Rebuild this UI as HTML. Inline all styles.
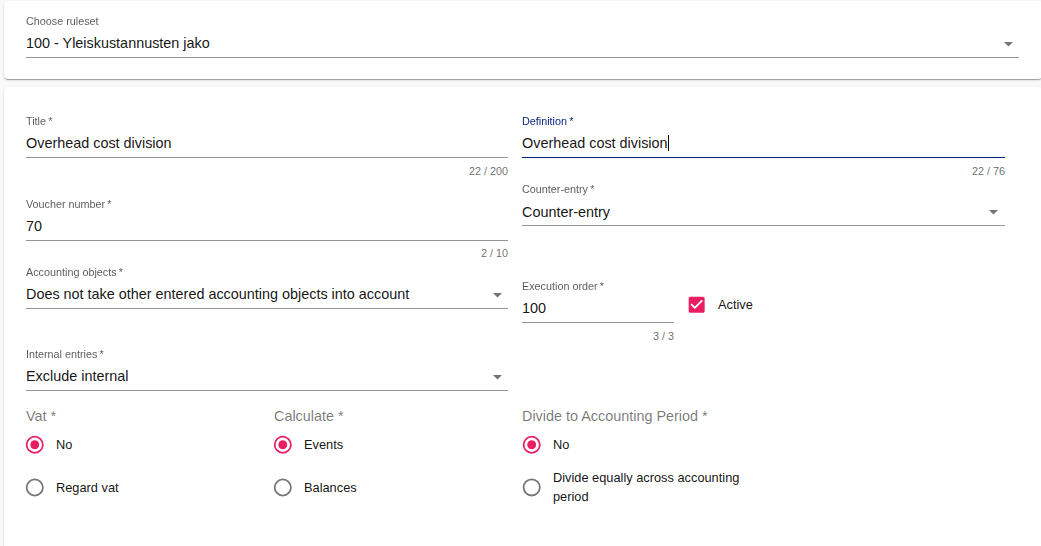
<!DOCTYPE html>
<html><head><meta charset="utf-8">
<style>
html,body{margin:0;padding:0;}
body{width:1041px;height:546px;overflow:hidden;background:#fafafa;position:relative;font-family:"Liberation Sans",sans-serif;}
.card{position:absolute;background:#fff;border-radius:4px;box-shadow:0 2px 1px -1px rgba(0,0,0,0.2),0 1px 1px 0 rgba(0,0,0,0.14),0 1px 3px 0 rgba(0,0,0,0.12);}
.t{position:absolute;white-space:nowrap;line-height:16px;}
.lab{font-size:14.4px;color:rgba(0,0,0,0.66);letter-spacing:0px;line-height:16px;transform:scale(0.75) translateZ(0);transform-origin:0 0;}
.val{font-size:14.4px;color:rgba(0,0,0,0.93);}
.help{font-size:10.8px;color:rgba(0,0,0,0.6);text-align:right;line-height:12px;}
.ul{position:absolute;height:1px;background:rgba(0,0,0,0.42);}
.arr{position:absolute;width:0;height:0;border-left:5px solid transparent;border-right:5px solid transparent;border-top:5px solid rgba(0,0,0,0.54);}
.leg{font-size:14.4px;color:rgba(0,0,0,0.54);}
.radio{position:absolute;width:24px;height:24px;}
.rl{font-size:12.8px;color:rgba(0,0,0,0.93);}
</style></head><body>
<div class="card" style="left:4px;top:1px;width:1038px;height:78px;"></div>
<div class="card" style="left:4px;top:87px;width:1038px;height:470px;"></div>

<!-- top select -->
<div class="t lab" style="left:26px;top:15px;">Choose ruleset</div>
<div class="t val" style="left:26px;top:35px;">100 - Yleiskustannusten jako</div>
<div class="ul" style="left:26px;top:57px;width:993px;"></div>
<svg style="position:absolute;left:1004.1px;top:41.8px;overflow:visible" width="9" height="4.5" viewBox="0 0 9 4.5"><polygon points="0,0 9,0 4.5,4.5" fill="rgba(0,0,0,0.54)"/></svg>

<!-- Title -->
<div class="t lab" style="left:26px;top:115px;">Title&thinsp;*</div>
<div class="t val" style="left:26px;top:135px;">Overhead cost division</div>
<div class="ul" style="left:26px;top:157px;width:482px;"></div>
<div class="t help" style="left:408px;width:100px;top:165px;">22 / 200</div>

<!-- Definition -->
<div class="t lab" style="left:522px;top:115px;color:#081f80;">Definition&thinsp;*</div>
<div class="t val" style="left:522px;top:135px;">Overhead cost division<span style="display:inline-block;width:1px;height:16px;background:#000;vertical-align:-3px;"></span></div>
<div class="ul" style="left:522px;top:157px;width:483px;height:1px;background:#00207f;"></div>
<div class="t help" style="left:905px;width:100px;top:165px;">22 / 76</div>

<!-- Voucher -->
<div class="t lab" style="left:26px;top:198px;">Voucher number&thinsp;*</div>
<div class="t val" style="left:26px;top:218px;">70</div>
<div class="ul" style="left:26px;top:240px;width:482px;"></div>
<div class="t help" style="left:408px;width:100px;top:247px;">2 / 10</div>

<!-- Counter-entry -->
<div class="t lab" style="left:522px;top:183px;">Counter-entry&thinsp;*</div>
<div class="t val" style="left:522px;top:204px;">Counter-entry</div>
<div class="ul" style="left:522px;top:225px;width:483px;"></div>
<svg style="position:absolute;left:989.1px;top:209.9px;overflow:visible" width="9" height="4.5" viewBox="0 0 9 4.5"><polygon points="0,0 9,0 4.5,4.5" fill="rgba(0,0,0,0.54)"/></svg>

<!-- Accounting objects -->
<div class="t lab" style="left:26px;top:266px;">Accounting objects&thinsp;*</div>
<div class="t val" style="left:26px;top:286px;">Does not take other entered accounting objects into account</div>
<div class="ul" style="left:26px;top:308px;width:482px;"></div>
<svg style="position:absolute;left:493.0px;top:292.8px;overflow:visible" width="9" height="4.5" viewBox="0 0 9 4.5"><polygon points="0,0 9,0 4.5,4.5" fill="rgba(0,0,0,0.54)"/></svg>

<!-- Execution order -->
<div class="t lab" style="left:522px;top:280px;">Execution order&thinsp;*</div>
<div class="t val" style="left:522px;top:300px;">100</div>
<div class="ul" style="left:522px;top:322px;width:152px;"></div>
<div class="t help" style="left:574px;width:100px;top:330px;">3 / 3</div>

<!-- Active checkbox -->
<svg style="position:absolute;left:686.33px;top:294.33px;" width="21.33" height="21.33" viewBox="0 0 24 24"><path fill="#e91e63" d="M19 3H5c-1.11 0-2 .9-2 2v14c0 1.1.89 2 2 2h14c1.11 0 2-.9 2-2V5c0-1.1-.89-2-2-2zm-9 14l-5-5 1.41-1.41L10 14.17l7.59-7.59L19 8l-9 9z"/></svg>
<div class="t rl" style="left:718px;top:297px;">Active</div>

<!-- Internal entries -->
<div class="t lab" style="left:26px;top:348px;">Internal entries&thinsp;*</div>
<div class="t val" style="left:26px;top:368px;">Exclude internal</div>
<div class="ul" style="left:26px;top:390px;width:482px;"></div>
<svg style="position:absolute;left:493.0px;top:374.8px;overflow:visible" width="9" height="4.5" viewBox="0 0 9 4.5"><polygon points="0,0 9,0 4.5,4.5" fill="rgba(0,0,0,0.54)"/></svg>

<!-- Vat -->
<div class="t leg" style="left:26px;top:408px;">Vat *</div>
<div class="t leg" style="left:274px;top:408px;">Calculate *</div>
<div class="t leg" style="left:522px;top:408px;">Divide to Accounting Period *</div>

<div class="t rl" style="left:56px;top:437px;">No</div>
<div class="t rl" style="left:56px;top:480px;">Regard vat</div>

<div class="t rl" style="left:304px;top:437px;">Events</div>
<div class="t rl" style="left:304px;top:480px;">Balances</div>

<div class="t rl" style="left:553px;top:437px;">No</div>
<div class="t rl" style="left:553px;top:469px;line-height:18.6px;white-space:normal;width:205px;">Divide equally across accounting period</div>

<svg class="radio" style="left:22px;top:432px;" width="24" height="24" viewBox="0 0 24 24"><circle cx="12.75" cy="12.75" r="8.11" fill="none" stroke="#e91e63" stroke-width="1.78"/><circle cx="12.75" cy="12.75" r="4.44" fill="#e91e63"/></svg>
<svg class="radio" style="left:22px;top:475px;" width="24" height="24" viewBox="0 0 24 24"><circle cx="12.75" cy="12.50" r="8.11" fill="none" stroke="rgba(0,0,0,0.54)" stroke-width="1.78"/></svg>
<svg class="radio" style="left:270px;top:432px;" width="24" height="24" viewBox="0 0 24 24"><circle cx="12.80" cy="12.75" r="8.11" fill="none" stroke="#e91e63" stroke-width="1.78"/><circle cx="12.80" cy="12.75" r="4.44" fill="#e91e63"/></svg>
<svg class="radio" style="left:270px;top:475px;" width="24" height="24" viewBox="0 0 24 24"><circle cx="12.80" cy="12.50" r="8.11" fill="none" stroke="rgba(0,0,0,0.54)" stroke-width="1.78"/></svg>
<svg class="radio" style="left:519px;top:432px;" width="24" height="24" viewBox="0 0 24 24"><circle cx="12.70" cy="12.75" r="8.11" fill="none" stroke="#e91e63" stroke-width="1.78"/><circle cx="12.70" cy="12.75" r="4.44" fill="#e91e63"/></svg>
<svg class="radio" style="left:519px;top:475px;" width="24" height="24" viewBox="0 0 24 24"><circle cx="12.70" cy="12.40" r="8.11" fill="none" stroke="rgba(0,0,0,0.54)" stroke-width="1.78"/></svg>
</body></html>
